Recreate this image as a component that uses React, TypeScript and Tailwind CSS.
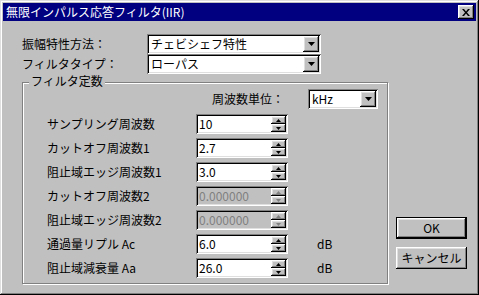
import React from "react";

const font = { fontFamily: '"Noto Sans CJK JP", "Noto Sans", sans-serif' };

const sunken =
  "shadow-[inset_1px_1px_0_#808080,inset_-1px_-1px_0_#ffffff,inset_2px_2px_0_#000000,inset_-2px_-2px_0_#dfdfdf]";
const raised =
  "shadow-[inset_-1px_-1px_0_#000000,inset_1px_1px_0_#ffffff,inset_-2px_-2px_0_#808080,inset_2px_2px_0_#dfdfdf]";

function DownArrow() {
  return (
    <svg width="7" height="4" viewBox="0 0 7 4">
      <path d="M0 0h7L3.5 4z" fill="#000" />
    </svg>
  );
}

function Combo({ value, width }: { value: string; width: number }) {
  return (
    <div
      className={`flex h-[20px] items-center bg-white ${sunken} pl-[4px] pr-[2px]`}
      style={{ width }}
    >
      <span className="flex-1 text-[12px] leading-none text-black">{value}</span>
      <div className={`flex h-[16px] w-[16px] items-center justify-center bg-[#c0c0c0] ${raised}`}>
        <DownArrow />
      </div>
    </div>
  );
}

function Tri({ up, color }: { up?: boolean; color: string }) {
  return (
    <svg width="5" height="3" viewBox="0 0 5 3">
      <path d={up ? "M2.5 0L5 3H0z" : "M0 0h5L2.5 3z"} fill={color} />
    </svg>
  );
}

function Spin({ value, disabled }: { value: string; disabled?: boolean }) {
  const arrow = disabled ? "#808080" : "#000";
  return (
    <div
      className={`flex h-[20px] w-[92px] items-center ${disabled ? "bg-[#c0c0c0]" : "bg-white"} ${sunken} pl-[3px] pr-[2px]`}
    >
      <span className={`flex-1 text-[12px] leading-none ${disabled ? "text-[#808080]" : "text-black"}`}>
        {value}
      </span>
      <div className="flex w-[15px] flex-col">
        <div className={`flex h-[8px] items-center justify-center bg-[#c0c0c0] ${raised}`}>
          <Tri up color={arrow} />
        </div>
        <div className={`flex h-[8px] items-center justify-center bg-[#c0c0c0] ${raised}`}>
          <Tri color={arrow} />
        </div>
      </div>
    </div>
  );
}

function Row({
  label,
  value,
  disabled,
  unit,
}: {
  label: string;
  value: string;
  disabled?: boolean;
  unit?: string;
}) {
  return (
    <div className="flex h-[20px] items-center">
      <span className="w-[149px] text-[12px] leading-none text-black">{label}</span>
      <Spin value={value} disabled={disabled} />
      {unit && <span className="ml-[29px] text-[12px] leading-none text-black">{unit}</span>}
    </div>
  );
}

export default function App() {
  return (
    <div
      className="flex h-[295px] w-[479px] flex-col bg-[#c0c0c0] p-[3px] shadow-[inset_-1px_-1px_0_#000000,inset_1px_1px_0_#dfdfdf,inset_-2px_-2px_0_#808080,inset_2px_2px_0_#ffffff]"
      style={font}
    >
      {/* Title bar */}
      <div className="flex h-[18px] items-center justify-between bg-[#000080] pl-[3px] pr-[2px]">
        <span className="text-[12px] leading-none text-white">無限インパルス応答フィルタ(IIR)</span>
        <div className={`flex h-[14px] w-[16px] items-center justify-center bg-[#c0c0c0] ${raised}`}>
          <svg width="8" height="7" viewBox="0 0 8 7">
            <path d="M0 0h2l2 2.5L6 0h2L5 3.5 8 7H6L4 4.5 2 7H0l3-3.5z" fill="#000" />
          </svg>
        </div>
      </div>

      {/* Body */}
      <div className="flex flex-1">
        <div className="flex flex-col">
          <div className="mt-[13px] flex h-[20px] items-center pl-[19px]">
            <span className="w-[125px] text-[12px] leading-none text-black">振幅特性方法：</span>
            <Combo value="チェビシェフ特性" width={174} />
          </div>
          <div className="flex h-[20px] items-center pl-[19px]">
            <span className="w-[125px] text-[12px] leading-none text-black">フィルタタイプ：</span>
            <Combo value="ローパス" width={174} />
          </div>

          {/* Group box */}
          <div className="relative ml-[19px] mt-[8px] h-[202px] w-[366px] border border-[#808080] shadow-[1px_1px_0_#ffffff,inset_1px_1px_0_#ffffff]">
            <span className="absolute left-[6px] top-[-8px] bg-[#c0c0c0] px-[2px] text-[12px] leading-none text-black">
              フィルタ定数
            </span>
            <div className="mt-[6px] flex h-[20px] items-center">
              <span className="ml-[189px] w-[96px] text-[12px] leading-none text-black">周波数単位：</span>
              <Combo value="kHz" width={70} />
            </div>
            <div className="mt-[5px] flex flex-col gap-[4px] pl-[24px]">
              <Row label="サンプリング周波数" value="10" />
              <Row label="カットオフ周波数1" value="2.7" />
              <Row label="阻止域エッジ周波数1" value="3.0" />
              <Row label="カットオフ周波数2" value="0.000000" disabled />
              <Row label="阻止域エッジ周波数2" value="0.000000" disabled />
              <Row label="通過量リプル Ac" value="6.0" unit="dB" />
              <Row label="阻止域減衰量 Aa" value="26.0" unit="dB" />
            </div>
          </div>
        </div>

        {/* Buttons */}
        <div className="ml-[8px] mt-[196px] flex flex-col gap-[8px]">
          <div className="h-[22px] w-[71px] border border-black">
            <div className={`flex h-full w-full items-center justify-center bg-[#c0c0c0] ${raised}`}>
              <span className="text-[12px] leading-none text-black">OK</span>
            </div>
          </div>
          <div className={`flex h-[22px] w-[71px] items-center justify-center bg-[#c0c0c0] ${raised}`}>
            <span className="text-[12px] leading-none text-black">キャンセル</span>
          </div>
        </div>
      </div>
    </div>
  );
}
